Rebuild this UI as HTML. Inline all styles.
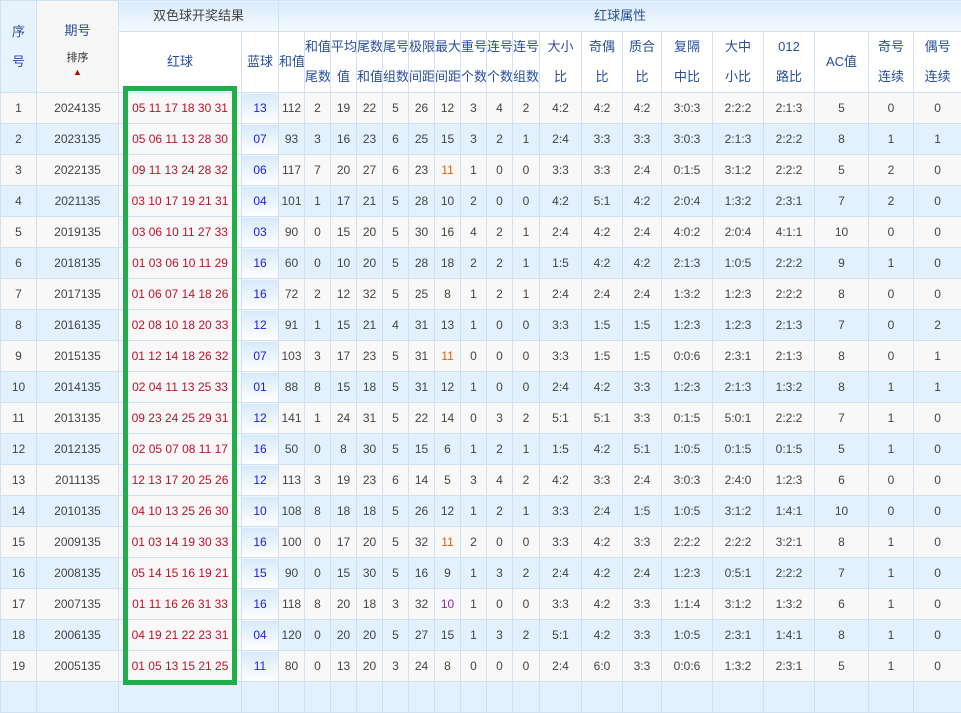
<!DOCTYPE html>
<html><head><meta charset="utf-8"><style>
body{margin:0;width:961px;height:687px;overflow:hidden;background:#e6f2fc;font-family:"Liberation Sans","Noto Sans CJK SC",sans-serif;}
table{border-collapse:collapse;table-layout:fixed;width:961px;position:absolute;left:0;top:0;font-size:12px;color:#444;}
td,th{border:1px solid #cfe1f2;text-align:center;padding:0;overflow:hidden;white-space:nowrap;font-weight:normal;}
th{color:#2a4e9c;background:#fff;line-height:30px;font-size:13px;}
tr.h1 th{background:linear-gradient(#d8ebfb,#f6fbff);color:#444;height:29px;}
tr.h1 th.b{color:#2a4e9c}
tr.h2 th{height:60px;}
tbody tr{height:31px;}
tbody tr:nth-child(odd) td{background:#f8f8f8;}
tbody tr:nth-child(even) td{background:#e2f1fd;}
tbody td.r{color:#c0102a;background:#f8f8f8 !important;}
tbody td.l{color:#1a1aee;background:linear-gradient(#d6eafb,#fff) !important;}
.o{color:#e0600a}.p{color:#8a2aa0}
#box{position:absolute;left:123px;top:86px;width:104px;height:589px;border:5px solid #1fae4b;}
.qh{line-height:16px !important;vertical-align:top;padding-top:22px !important;}
.sort{font-size:11px;color:#333;line-height:14px;display:block;margin-top:12px}
</style></head><body>
<table>
<colgroup><col style="width:36px"><col style="width:82px"><col style="width:123px"><col style="width:37px"><col style="width:26px"><col style="width:26px"><col style="width:26px"><col style="width:26px"><col style="width:26px"><col style="width:26px"><col style="width:26px"><col style="width:26px"><col style="width:26px"><col style="width:27px"><col style="width:42px"><col style="width:41px"><col style="width:39px"><col style="width:51px"><col style="width:51px"><col style="width:51px"><col style="width:54px"><col style="width:45px"><col style="width:48px"></colgroup>
<thead>
<tr class="h1"><th rowspan="2" class="b" style="background:#e6f2fc">序<br>号</th><th rowspan="2" class="b qh" style="background:#f6f6f6">期号<span class="sort">排序<br><span style="color:#b00;font-size:9px">▲</span></span></th><th colspan="2">双色球开奖结果</th><th colspan="19" class="b">红球属性</th></tr>
<tr class="h2"><th>红球</th><th>蓝球</th><th>和值</th><th>和值<br>尾数</th><th>平均<br>值</th><th>尾数<br>和值</th><th>尾号<br>组数</th><th>极限<br>间距</th><th>最大<br>间距</th><th>重号<br>个数</th><th>连号<br>个数</th><th>连号<br>组数</th><th>大小<br>比</th><th>奇偶<br>比</th><th>质合<br>比</th><th>复隔<br>中比</th><th>大中<br>小比</th><th>012<br>路比</th><th>AC值</th><th>奇号<br>连续</th><th>偶号<br>连续</th></tr>
</thead>
<tbody>
<tr><td>1</td><td>2024135</td><td class="r">05 11 17 18 30 31</td><td class="l">13</td><td>112</td><td>2</td><td>19</td><td>22</td><td>5</td><td>26</td><td>12</td><td>3</td><td>4</td><td>2</td><td>4:2</td><td>4:2</td><td>4:2</td><td>3:0:3</td><td>2:2:2</td><td>2:1:3</td><td>5</td><td>0</td><td>0</td></tr>
<tr><td>2</td><td>2023135</td><td class="r">05 06 11 13 28 30</td><td class="l">07</td><td>93</td><td>3</td><td>16</td><td>23</td><td>6</td><td>25</td><td>15</td><td>3</td><td>2</td><td>1</td><td>2:4</td><td>3:3</td><td>3:3</td><td>3:0:3</td><td>2:1:3</td><td>2:2:2</td><td>8</td><td>1</td><td>1</td></tr>
<tr><td>3</td><td>2022135</td><td class="r">09 11 13 24 28 32</td><td class="l">06</td><td>117</td><td>7</td><td>20</td><td>27</td><td>6</td><td>23</td><td class="o">11</td><td>1</td><td>0</td><td>0</td><td>3:3</td><td>3:3</td><td>2:4</td><td>0:1:5</td><td>3:1:2</td><td>2:2:2</td><td>5</td><td>2</td><td>0</td></tr>
<tr><td>4</td><td>2021135</td><td class="r">03 10 17 19 21 31</td><td class="l">04</td><td>101</td><td>1</td><td>17</td><td>21</td><td>5</td><td>28</td><td>10</td><td>2</td><td>0</td><td>0</td><td>4:2</td><td>5:1</td><td>4:2</td><td>2:0:4</td><td>1:3:2</td><td>2:3:1</td><td>7</td><td>2</td><td>0</td></tr>
<tr><td>5</td><td>2019135</td><td class="r">03 06 10 11 27 33</td><td class="l">03</td><td>90</td><td>0</td><td>15</td><td>20</td><td>5</td><td>30</td><td>16</td><td>4</td><td>2</td><td>1</td><td>2:4</td><td>4:2</td><td>2:4</td><td>4:0:2</td><td>2:0:4</td><td>4:1:1</td><td>10</td><td>0</td><td>0</td></tr>
<tr><td>6</td><td>2018135</td><td class="r">01 03 06 10 11 29</td><td class="l">16</td><td>60</td><td>0</td><td>10</td><td>20</td><td>5</td><td>28</td><td>18</td><td>2</td><td>2</td><td>1</td><td>1:5</td><td>4:2</td><td>4:2</td><td>2:1:3</td><td>1:0:5</td><td>2:2:2</td><td>9</td><td>1</td><td>0</td></tr>
<tr><td>7</td><td>2017135</td><td class="r">01 06 07 14 18 26</td><td class="l">16</td><td>72</td><td>2</td><td>12</td><td>32</td><td>5</td><td>25</td><td>8</td><td>1</td><td>2</td><td>1</td><td>2:4</td><td>2:4</td><td>2:4</td><td>1:3:2</td><td>1:2:3</td><td>2:2:2</td><td>8</td><td>0</td><td>0</td></tr>
<tr><td>8</td><td>2016135</td><td class="r">02 08 10 18 20 33</td><td class="l">12</td><td>91</td><td>1</td><td>15</td><td>21</td><td>4</td><td>31</td><td>13</td><td>1</td><td>0</td><td>0</td><td>3:3</td><td>1:5</td><td>1:5</td><td>1:2:3</td><td>1:2:3</td><td>2:1:3</td><td>7</td><td>0</td><td>2</td></tr>
<tr><td>9</td><td>2015135</td><td class="r">01 12 14 18 26 32</td><td class="l">07</td><td>103</td><td>3</td><td>17</td><td>23</td><td>5</td><td>31</td><td class="o">11</td><td>0</td><td>0</td><td>0</td><td>3:3</td><td>1:5</td><td>1:5</td><td>0:0:6</td><td>2:3:1</td><td>2:1:3</td><td>8</td><td>0</td><td>1</td></tr>
<tr><td>10</td><td>2014135</td><td class="r">02 04 11 13 25 33</td><td class="l">01</td><td>88</td><td>8</td><td>15</td><td>18</td><td>5</td><td>31</td><td>12</td><td>1</td><td>0</td><td>0</td><td>2:4</td><td>4:2</td><td>3:3</td><td>1:2:3</td><td>2:1:3</td><td>1:3:2</td><td>8</td><td>1</td><td>1</td></tr>
<tr><td>11</td><td>2013135</td><td class="r">09 23 24 25 29 31</td><td class="l">12</td><td>141</td><td>1</td><td>24</td><td>31</td><td>5</td><td>22</td><td>14</td><td>0</td><td>3</td><td>2</td><td>5:1</td><td>5:1</td><td>3:3</td><td>0:1:5</td><td>5:0:1</td><td>2:2:2</td><td>7</td><td>1</td><td>0</td></tr>
<tr><td>12</td><td>2012135</td><td class="r">02 05 07 08 11 17</td><td class="l">16</td><td>50</td><td>0</td><td>8</td><td>30</td><td>5</td><td>15</td><td>6</td><td>1</td><td>2</td><td>1</td><td>1:5</td><td>4:2</td><td>5:1</td><td>1:0:5</td><td>0:1:5</td><td>0:1:5</td><td>5</td><td>1</td><td>0</td></tr>
<tr><td>13</td><td>2011135</td><td class="r">12 13 17 20 25 26</td><td class="l">12</td><td>113</td><td>3</td><td>19</td><td>23</td><td>6</td><td>14</td><td>5</td><td>3</td><td>4</td><td>2</td><td>4:2</td><td>3:3</td><td>2:4</td><td>3:0:3</td><td>2:4:0</td><td>1:2:3</td><td>6</td><td>0</td><td>0</td></tr>
<tr><td>14</td><td>2010135</td><td class="r">04 10 13 25 26 30</td><td class="l">10</td><td>108</td><td>8</td><td>18</td><td>18</td><td>5</td><td>26</td><td>12</td><td>1</td><td>2</td><td>1</td><td>3:3</td><td>2:4</td><td>1:5</td><td>1:0:5</td><td>3:1:2</td><td>1:4:1</td><td>10</td><td>0</td><td>0</td></tr>
<tr><td>15</td><td>2009135</td><td class="r">01 03 14 19 30 33</td><td class="l">16</td><td>100</td><td>0</td><td>17</td><td>20</td><td>5</td><td>32</td><td class="o">11</td><td>2</td><td>0</td><td>0</td><td>3:3</td><td>4:2</td><td>3:3</td><td>2:2:2</td><td>2:2:2</td><td>3:2:1</td><td>8</td><td>1</td><td>0</td></tr>
<tr><td>16</td><td>2008135</td><td class="r">05 14 15 16 19 21</td><td class="l">15</td><td>90</td><td>0</td><td>15</td><td>30</td><td>5</td><td>16</td><td>9</td><td>1</td><td>3</td><td>2</td><td>2:4</td><td>4:2</td><td>2:4</td><td>1:2:3</td><td>0:5:1</td><td>2:2:2</td><td>7</td><td>1</td><td>0</td></tr>
<tr><td>17</td><td>2007135</td><td class="r">01 11 16 26 31 33</td><td class="l">16</td><td>118</td><td>8</td><td>20</td><td>18</td><td>3</td><td>32</td><td class="p">10</td><td>1</td><td>0</td><td>0</td><td>3:3</td><td>4:2</td><td>3:3</td><td>1:1:4</td><td>3:1:2</td><td>1:3:2</td><td>6</td><td>1</td><td>0</td></tr>
<tr><td>18</td><td>2006135</td><td class="r">04 19 21 22 23 31</td><td class="l">04</td><td>120</td><td>0</td><td>20</td><td>20</td><td>5</td><td>27</td><td>15</td><td>1</td><td>3</td><td>2</td><td>5:1</td><td>4:2</td><td>3:3</td><td>1:0:5</td><td>2:3:1</td><td>1:4:1</td><td>8</td><td>1</td><td>0</td></tr>
<tr><td>19</td><td>2005135</td><td class="r">01 05 13 15 21 25</td><td class="l">11</td><td>80</td><td>0</td><td>13</td><td>20</td><td>3</td><td>24</td><td>8</td><td>0</td><td>0</td><td>0</td><td>2:4</td><td>6:0</td><td>3:3</td><td>0:0:6</td><td>1:3:2</td><td>2:3:1</td><td>5</td><td>1</td><td>0</td></tr>
<tr><td></td><td></td><td></td><td></td><td></td><td></td><td></td><td></td><td></td><td></td><td></td><td></td><td></td><td></td><td></td><td></td><td></td><td></td><td></td><td></td><td></td><td></td><td></td></tr>
</tbody>
</table>
<div id="box"></div>
</body></html>
